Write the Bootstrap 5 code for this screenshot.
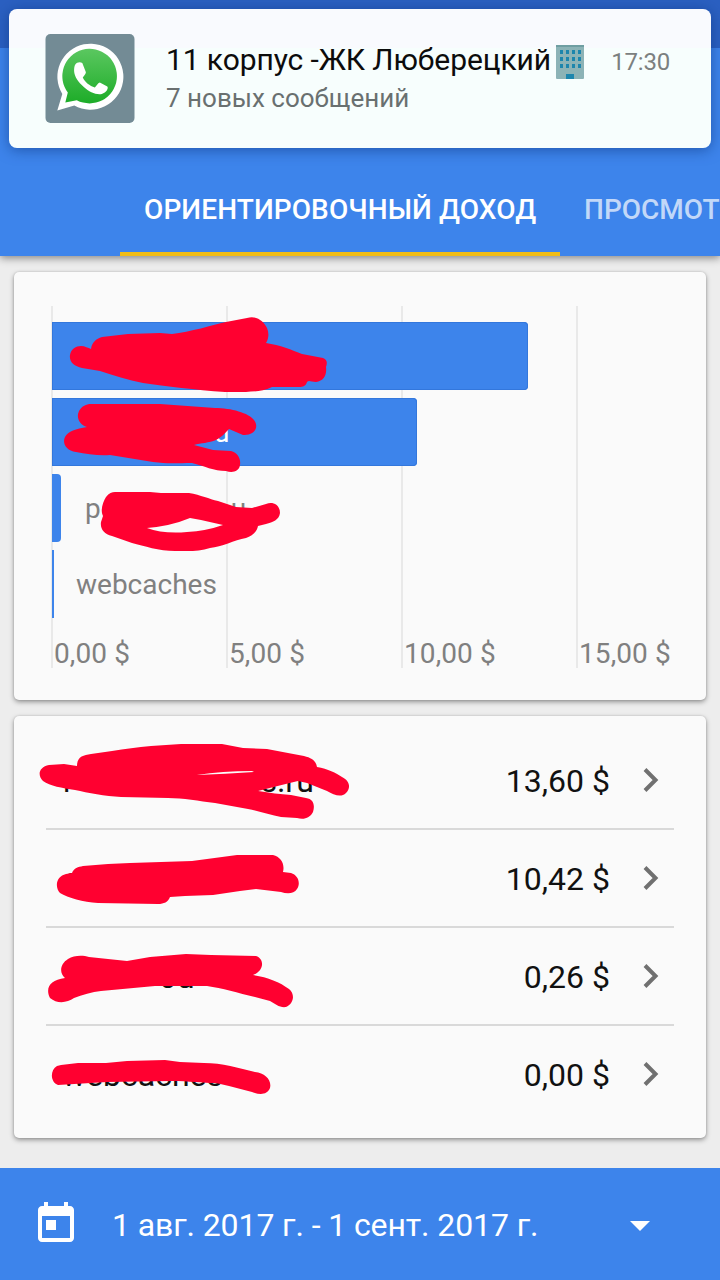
<!DOCTYPE html>
<html lang="ru">
<head>
<meta charset="utf-8">
<meta name="viewport" content="width=device-width, initial-scale=1">
<title>Ориентировочный доход</title>
<link href="https://cdn.jsdelivr.net/npm/bootstrap@5.3.0/dist/css/bootstrap.min.css" rel="stylesheet">
<style>
  body { font-family: Roboto, "Noto Sans", sans-serif; background: #ededed; width: 720px; height: 1280px; line-height: 1; color: #111; }
  svg { display: block; }
  .app-header { height: 256px; background: #3d84eb; box-shadow: 0 2px 8px rgba(0,0,0,.45); }
  .status-strip { height: 48px; background: #2b60c1; }
  .toolbar-space { height: 112px; }
  .tab-row { height: 96px; padding-left: 120px; }
  .tab-item { height: 96px; padding: 36px 0 0 24px; font-size: 28px; font-weight: 500; color: rgba(255,255,255,.7); }
  .tab-item.current { width: 440px; color: #fff; border-bottom: 4px solid #f1bd16; letter-spacing: .1px; }
  .notice { left: 9px; top: 9px; width: 702px; height: 139px; border-radius: 8px; background: linear-gradient(#f9fafe 0 39px, #f7fefd 39px); box-shadow: 0 2px 14px rgba(10,50,120,.55); padding-left: 36px; }
  .notice-title { font-size: 30px; letter-spacing: -.1px; color: #0c0c0c; height: 35px; }
  .notice-time { font-size: 24px; letter-spacing: -.2px; color: #7b8080; }
  .notice-text { font-size: 26px; color: #697070; }
  .panel { width: 692px; margin-left: 14px; border: 0; border-radius: 5px; background: #fafafa; box-shadow: 0 2px 5px rgba(0,0,0,.38), 0 0 2px rgba(0,0,0,.15); }
  .chart-panel { height: 428px; margin-top: 16px; padding: 34px 0 0 37px; }
  .plot > * { grid-area: 1 / 1; }
  .axis-col { width: 175px; height: 362px; border-left: 2px solid #e9e9e9; padding-left: 1px; font-size: 28px; letter-spacing: .1px; color: #808080; white-space: nowrap; }
  .axis-col span { line-height: 28px; }
  .bars { padding: 16px 0 0 1px; gap: 8px; font-size: 28px; color: #808080; }
  .bar-line { height: 68px; }
  .bar-line span { padding-top: 2px; }
  .bar { height: 68px; background: #3d84eb; border-radius: 0 4px 4px 0; }
  .bar.edged { box-shadow: inset 0 0 0 1px #3377dc; }
  .list-panel { height: 422px; margin-top: 16px; padding: 16px 32px 0; }
  .site-row { height: 98px; border-bottom: 2px solid #d9d9d9; padding: 0 15px 0 16px; font-size: 32px; }
  .site-row span { padding-top: 2px; }
  .site-row:last-of-type { border-bottom-color: transparent; }
  .marker { left: 0; top: 0; overflow: visible; fill: #ff0030; stroke: none; }
  .date-bar { height: 112px; margin-top: 30px; padding: 0 70px 0 32px; background: #3d84eb; color: #fff; font-size: 32px; }
  .date-bar span { letter-spacing: -.1px; padding-top: 2px; }
</style>
</head>
<body class="overflow-hidden position-relative">

<header class="app-header position-relative">
  <div class="status-strip"></div>
  <div class="toolbar-space"></div>
  <nav class="tab-row d-flex overflow-hidden text-nowrap">
    <div class="tab-item current flex-shrink-0">ОРИЕНТИРОВОЧНЫЙ ДОХОД</div>
    <div class="tab-item">ПРОСМОТ</div>
  </nav>
</header>

<section class="notice position-absolute d-flex align-items-start z-3">
  <svg style="margin-top:25px" width="90" height="89" viewBox="0 0 90 89">
    <defs><linearGradient id="wa" x1="0" y1="0" x2="0" y2="1"><stop offset="0" stop-color="#5bc760"/><stop offset="1" stop-color="#1dac28"/></linearGradient></defs>
    <rect x=".5" width="89" height="89" rx="5" fill="#738b95"/>
    <g transform="translate(.8 0)">
    <path d="M11.500 76.500L16.500 60A33 33 0 1 1 28.500 71.500Z" fill="#fff"/>
    <path d="M19.500 68.500L22 58.500A27.300 27.300 0 1 1 31 66.200Z" fill="url(#wa)"/>
    <path d="M29.500 30.500C31 28 34.500 27.500 36.500 29L40 38C40.500 39.500 38 42 37 43.500C39 48 44 52 49 53.500C50.500 52 52 49 54 48.500L61.500 52.500C63 54.500 60.500 58.500 56 60C50 61 43.500 58 38 53C32.500 48 28.500 42.500 28.300 37C28.200 34.500 28.500 32 29.500 30.500Z" fill="#fff"/>
    </g>
  </svg>
  <div class="flex-grow-1" style="padding:35px 41px 0 31px">
    <div class="notice-title d-flex align-items-center text-nowrap">
      <span style="margin-top:-3px">11 корпус -ЖК Люберецкий</span>
      <svg style="margin-left:5px" width="28" height="35" viewBox="0 0 28 35">
        <rect y="1" width="28" height="34" rx="1" fill="#8cb3b6"/>
        <rect y="1" width="28" height="2" fill="#6f9ea2"/>
        <g fill="#1d86ad"><path d="M4 6h3v4h-3zM10 6h3v4h-3zM16 6h3v4h-3zM22 6h3v4h-3zM4 13h3v4h-3zM10 13h3v4h-3zM16 13h3v4h-3zM22 13h3v4h-3zM4 20h3v4h-3zM10 20h3v4h-3zM16 20h3v4h-3zM22 20h3v4h-3zM10 30h8v5h-8z"/></g>
      </svg>
      <span class="notice-time ms-auto">17:30</span>
    </div>
    <div class="notice-text" style="margin-top:6px">7 новых сообщений</div>
  </div>
</section>

<main>
  <section class="panel chart-panel position-relative">
    <div class="plot d-grid">
      <div class="d-flex">
        <div class="axis-col d-flex align-items-end"><span>0,00 $</span></div>
        <div class="axis-col d-flex align-items-end"><span>5,00 $</span></div>
        <div class="axis-col d-flex align-items-end"><span>10,00 $</span></div>
        <div class="axis-col d-flex align-items-end"><span>15,00 $</span></div>
      </div>
      <div class="bars d-flex flex-column">
        <div class="bar-line"><div class="bar edged" style="width:476px"></div></div>
        <div class="bar-line"><div class="bar edged d-flex align-items-center text-white" style="width:365px"><span style="margin-left:162px">u</span></div></div>
        <div class="bar-line d-flex align-items-center"><div class="bar" style="width:9px"></div><span style="margin-left:24px">p</span><span style="margin-left:130px">u</span></div>
        <div class="bar-line d-flex align-items-center"><div class="bar rounded-0" style="width:2px"></div><span style="margin-left:22px">webcaches</span></div>
      </div>
    </div>
    <svg class="marker position-absolute" width="692" height="428" viewBox="14 272 692 428">
      <path d="M70 355C71 349 76 346 81 346C85 346 88 348 91 349C92 342 96 339 102 337L128 334L160 333L172 334C190 332 213 325 226 322L247 318C256 315 264 321 267 328C269 333 269 338 266 343C280 345 292 350 302 354L323 358C328 360 327 364 326 367C327 375 324 381 316 382C311 382 309 380 307 382C306 386 303 387 299 387L272 387C263 392 254 391 246 392L225 392C195 390 166 386 143 383C128 380 113 375 100 371L82 368C74 366 69 362 70 355Z"/>
      <path d="M91 404L160 404L215 408C231 408 249 413 254 420C260 428 253 436 243 435L229 429C225 433 222 437 216 440C209 443 201 443 194 445L213 450L231 451C238 453 241 459 240 465C239 472 232 473 226 471C214 471 204 466 192 463C178 463 167 464 153 462L110 455C99 456 87 454 76 452C66 451 62 443 65 437C68 431 76 429 87 427C79 425 76 417 79 411C82 406 86 404 91 404Z"/>
      <path fill-rule="evenodd" d="M115 492L150 492L161 493L189 493C201 495 209 499 218 501L236 507L252 508L266 504C273 501 280 505 280 513C279 520 273 522 266 524L258 526C257 532 252 536 246 538C234 540 222 547 210 548C199 552 187 551 175 551C159 551 144 546 132 543L112 536C104 534 100 529 101 522L103 516C100 510 103 502 106 497C109 493 112 492 115 492ZM147 528Q163 534 187 532Q206 531 223 525L201 520L190 518Q171 526 147 528Z"/>
    </svg>
  </section>

  <section class="panel list-panel position-relative">
    <div class="site-row d-flex align-items-center"><span style="margin-left:1px">r</span><span class="text-end" style="width:240px">is.ru</span><span class="ms-auto">13,60 $</span><svg style="margin-left:33px" width="16" height="24" viewBox="0 0 16 24" fill="none" stroke="#707070" stroke-width="4"><path d="M2 1.500L12.500 12L2 22.500"/></svg></div>
    <div class="site-row d-flex align-items-center"><span style="margin-left:1px">c</span><span class="ms-auto">10,42 $</span><svg style="margin-left:33px" width="16" height="24" viewBox="0 0 16 24" fill="none" stroke="#707070" stroke-width="4"><path d="M2 1.500L12.500 12L2 22.500"/></svg></div>
    <div class="site-row d-flex align-items-center"><span style="margin-left:1px">r</span><span style="margin-left:85px">ou</span><span class="ms-auto">0,26 $</span><svg style="margin-left:33px" width="16" height="24" viewBox="0 0 16 24" fill="none" stroke="#707070" stroke-width="4"><path d="M2 1.500L12.500 12L2 22.500"/></svg></div>
    <div class="site-row d-flex align-items-center"><span>webcaches</span><span class="ms-auto">0,00 $</span><svg style="margin-left:33px" width="16" height="24" viewBox="0 0 16 24" fill="none" stroke="#707070" stroke-width="4"><path d="M2 1.500L12.500 12L2 22.500"/></svg></div>
    <svg class="marker position-absolute" width="692" height="422" viewBox="14 716 692 422">
      <path fill-rule="evenodd" d="M49 765L64 764L77 766C77 757 83 755 91 754L112 751C125 749 137 747 151 746L181 744L222 744L243 748L267 749L288 753L304 756C312 758 316 761 317 767C328 769 336 773 342 777C350 781 351 788 346 793C341 798 334 795 327 791L307 783L298 781C284 784 271 788 258 791C270 793 280 794 291 795L306 798C314 799 315 806 313 812C310 818 304 820 297 818L281 817C270 815 258 811 248 809L215 803C199 801 183 798 168 798L121 797C105 796 88 793 75 790C62 788 50 786 43 781C37 775 39 767 49 765ZM197 775Q225 774 254 772L252 771Q222 771 197 775Z"/>
      <path d="M83 866L108 864L130 863L192 861L237 855L273 855C281 857 285 864 283 872L291 873C298 875 301 883 297 889C294 894 287 894 281 892L256 889L240 891L213 895L185 896L170 897C168 902 164 904 158 904L98 903C83 902 68 898 60 893C54 886 57 876 66 874L72 873C74 868 78 867 83 866Z"/>
      <path d="M68 959C74 955 83 955 89 957L127 961L150 957L186 954L211 955L256 956C265 959 264 971 253 975C267 977 280 982 289 989C296 995 293 1004 286 1007C280 1008 275 1004 270 1001L255 997C238 993 222 988 207 986L155 986L101 991C92 992 82 995 74 998C67 1003 57 1004 50 998C45 988 50 980 65 978C59 973 60 964 68 959Z"/>
      <path d="M61 1065L78 1063L106 1063L127 1061L165 1060L180 1062L204 1063C222 1063 239 1068 255 1072C265 1073 272 1080 270 1088C267 1095 260 1095 252 1092L229 1086L216 1083C202 1083 190 1081 171 1081L107 1082L58 1085C50 1082 50 1070 57 1066Z"/>
    </svg>
  </section>
</main>

<footer class="date-bar d-flex align-items-center">
  <svg width="48" height="48" viewBox="0 0 24 24" fill="#fff"><path fill-rule="evenodd" d="M19 3h-1V1h-2v2H8V1H6v2H5C3.890 3 3 3.900 3 5v14c0 1.100.890 2 2 2h14c1.100 0 2-.900 2-2V5c0-1.100-.900-2-2-2zm0 16H5V8h14v11zM7 10h5v5H7z"/></svg>
  <span style="margin-left:32px">1 авг. 2017 г. - 1 сент. 2017 г.</span>
  <svg class="ms-auto mt-1" width="20" height="10" viewBox="0 0 20 10" fill="#fff"><path d="M0 0h20L10 10z"/></svg>
</footer>

<script src="https://cdn.jsdelivr.net/npm/bootstrap@5.3.0/dist/js/bootstrap.bundle.min.js"></script>
</body>
</html>
